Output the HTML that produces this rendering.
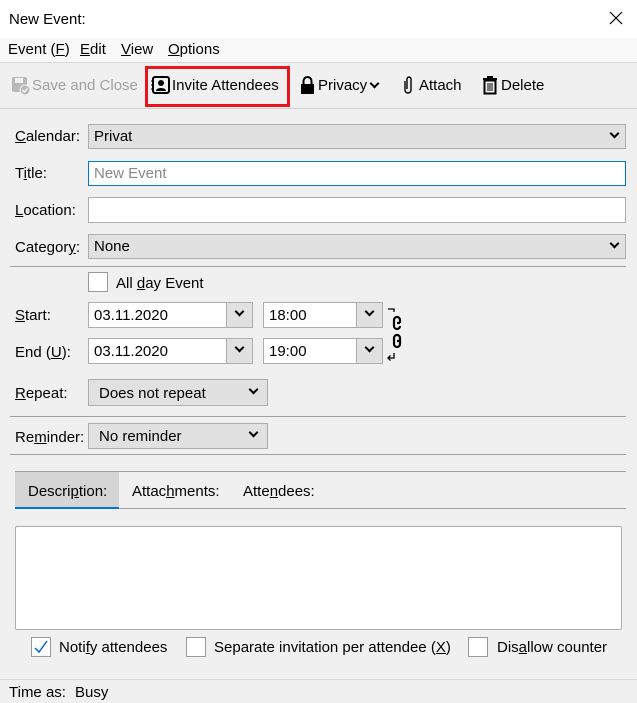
<!DOCTYPE html>
<html><head><meta charset="utf-8"><style>
*{box-sizing:border-box;margin:0;padding:0}
body{width:637px;height:703px;background:#f0f0f0;font-family:"Liberation Sans",sans-serif;font-size:15px;color:#000;position:relative;overflow:hidden}
.a{position:absolute;white-space:nowrap}
.lbl{line-height:20px}
.sel{position:absolute;background:#e1e1e1;border:1px solid #adadad;padding-left:5px;line-height:24px}
.inp{position:absolute;background:#fff;border:1px solid #adadad;padding-left:5px;line-height:25px}
.btn{position:absolute;background:#e1e1e1;border:1px solid #adadad}
.chev{position:absolute;width:7px;height:7px;border-right:2px solid #000;border-bottom:2px solid #000;transform:rotate(45deg)}
.cb{position:absolute;width:20px;height:20px;background:#fff;border:1px solid #999}
.hr{position:absolute;height:1px;background:#a0a0a0}
u{text-decoration:underline}
</style></head><body>
<div class="a" style="left:0;top:0;width:637px;height:38px;background:#fff"></div>
<div class="a lbl" style="left:9px;top:10px">New Event:</div>
<svg class="a" style="left:609px;top:11px" width="14" height="14"><path d="M1 1L13 13M13 1L1 13" stroke="#000" stroke-width="1.2"/></svg>
<div class="a" style="left:0;top:38px;width:637px;height:24px;background:#f9f9f9"></div>
<div class="a lbl" style="left:8px;top:40px">Event (<u>F</u>)</div>
<div class="a lbl" style="left:80px;top:40px"><u>E</u>dit</div>
<div class="a lbl" style="left:121px;top:40px"><u>V</u>iew</div>
<div class="a lbl" style="left:168px;top:40px"><u>O</u>ptions</div>
<div class="hr" style="left:0;top:62px;width:637px;background:#d8d8d8"></div>
<svg class="a" style="left:11px;top:76px" width="20" height="19"><rect x="1" y="1" width="15" height="15" rx="2" fill="#b8b8b8"/><rect x="4" y="2" width="8" height="5" fill="#f0f0f0"/><circle cx="14" cy="14" r="5" fill="#b8b8b8" stroke="#f0f0f0"/><path d="M11.5 14l2 2 3-3.5" stroke="#fff" fill="none" stroke-width="1.3"/></svg>
<div class="a lbl" style="left:32px;top:76px;color:#a0a0a0">Save and Close</div>
<div class="a" style="left:145px;top:66px;width:145px;height:41px;border:3px solid #e8141e"></div>
<svg class="a" style="left:151px;top:76px" width="20" height="18"><rect x="2" y="1" width="16" height="16" rx="2" fill="none" stroke="#000" stroke-width="2"/><circle cx="10" cy="7" r="3" fill="#000"/><path d="M5 15c0-4 10-4 10 0z" fill="#000"/><path d="M0 5h3M0 9h3M0 13h3" stroke="#000"/></svg>
<div class="a lbl" style="left:172px;top:76px">Invite Attendees</div>
<svg class="a" style="left:300px;top:75px" width="15" height="19"><path d="M3.5 9V6a4 4 0 0 1 8 0v3" stroke="#000" stroke-width="2" fill="none"/><rect x="1" y="9" width="13" height="10" fill="#000"/></svg>
<div class="a lbl" style="left:318px;top:76px">Privacy</div>
<div class="chev" style="left:371px;top:80px"></div>
<svg class="a" style="left:402px;top:75px" width="12" height="20"><path d="M3 6v9a3 3 0 0 0 6 0V4a2 2 0 0 0-4 0v10" stroke="#000" stroke-width="1.4" fill="none"/></svg>
<div class="a lbl" style="left:419px;top:76px">Attach</div>
<svg class="a" style="left:482px;top:75px" width="16" height="20"><path d="M1 4h14M6 4V2h4v2" stroke="#000" stroke-width="2" fill="none"/><rect x="2.5" y="5.5" width="11" height="13" fill="none" stroke="#000" stroke-width="2"/><path d="M6 8v8M8 8v8M10 8v8" stroke="#000"/></svg>
<div class="a lbl" style="left:501px;top:76px">Delete</div>
<div class="hr" style="left:0;top:108px;width:637px;background:#d0d0d0"></div>
<div class="a lbl" style="left:15px;top:127px"><u>C</u>alendar:</div>
<div class="sel" style="left:88px;top:124px;width:538px;height:25px">Privat</div><div class="chev" style="left:611px;top:130px"></div>
<div class="a lbl" style="left:15px;top:164px">T<u>i</u>tle:</div>
<div class="inp" style="left:88px;top:161px;width:538px;height:25px;border-color:#0078d7;color:#888;line-height:24px">New Event</div>
<div class="a lbl" style="left:15px;top:201px"><u>L</u>ocation:</div>
<div class="inp" style="left:88px;top:197px;width:538px;height:26px"></div>
<div class="a lbl" style="left:15px;top:238px">Categor<u>y</u>:</div>
<div class="sel" style="left:88px;top:234px;width:538px;height:25px">None</div><div class="chev" style="left:611px;top:240px"></div>
<div class="hr" style="left:10px;top:266px;width:616px"></div>
<div class="cb" style="left:88px;top:272px"></div>
<div class="a lbl" style="left:116px;top:274px">All <u>d</u>ay Event</div>
<div class="a lbl" style="left:15px;top:306px"><u>S</u>tart:</div>
<div class="inp" style="left:88px;top:302px;width:139px;height:26px">03.11.2020</div>
<div class="btn" style="left:226px;top:302px;width:27px;height:26px"></div><div class="chev" style="left:236px;top:308px"></div>
<div class="inp" style="left:263px;top:302px;width:94px;height:26px">18:00</div>
<div class="btn" style="left:356px;top:302px;width:27px;height:26px"></div><div class="chev" style="left:366px;top:308px"></div>
<div class="a lbl" style="left:15px;top:343px">End (<u>U</u>):</div>
<div class="inp" style="left:88px;top:338px;width:139px;height:26px">03.11.2020</div>
<div class="btn" style="left:226px;top:338px;width:27px;height:26px"></div><div class="chev" style="left:236px;top:344px"></div>
<div class="inp" style="left:263px;top:338px;width:94px;height:26px">19:00</div>
<div class="btn" style="left:356px;top:338px;width:27px;height:26px"></div><div class="chev" style="left:366px;top:344px"></div>
<svg class="a" style="left:386px;top:306px" width="18" height="56"><path d="M2 3h6v3" stroke="#000" stroke-width="1.3" fill="none"/><path d="M8 47v5H2M4.5 49.5L2 52l2.5 2.5" stroke="#000" stroke-width="1.3" fill="none"/><path d="M14 17v-3a3 3 0 0 0-6 0v6a3 3 0 0 0 6 0M11 17h3" stroke="#000" stroke-width="2.2" fill="none"/><path d="M14 35v-3a3 3 0 0 0-6 0v6a3 3 0 0 0 6 0v-3M11 35h3" stroke="#000" stroke-width="2.2" fill="none"/></svg>
<div class="a lbl" style="left:15px;top:384px"><u>R</u>epeat:</div>
<div class="sel" style="left:88px;top:379px;width:180px;height:27px;padding-left:10px;line-height:27px">Does not repeat</div><div class="chev" style="left:250px;top:386px"></div>
<div class="hr" style="left:10px;top:416px;width:616px"></div>
<div class="a lbl" style="left:15px;top:428px">Re<u>m</u>inder:</div>
<div class="sel" style="left:88px;top:423px;width:180px;height:26px;padding-left:10px;line-height:26px">No reminder</div><div class="chev" style="left:250px;top:429px"></div>
<div class="hr" style="left:10px;top:454px;width:616px"></div>
<div class="hr" style="left:15px;top:471px;width:611px"></div>
<div class="a" style="left:15px;top:472px;width:104px;height:37px;background:#d5d5d5;border-bottom:2px solid #0078d7"></div>
<div class="a lbl" style="left:28px;top:482px">Descri<u>p</u>tion:</div>
<div class="a lbl" style="left:132px;top:482px">Attac<u>h</u>ments:</div>
<div class="a lbl" style="left:243px;top:482px">Atte<u>n</u>dees:</div>
<div class="hr" style="left:119px;top:508px;width:507px"></div>
<div class="a" style="left:15px;top:526px;width:607px;height:104px;background:#fff;border:1px solid #adadad;border-radius:2px"></div>
<div class="cb" style="left:31px;top:637px"></div>
<svg class="a" style="left:34px;top:640px" width="14" height="14"><path d="M1 8l4 4L13 1" stroke="#0060c0" stroke-width="1.4" fill="none"/></svg>
<div class="a lbl" style="left:59px;top:638px">Noti<u>f</u>y attendees</div>
<div class="cb" style="left:186px;top:637px"></div>
<div class="a lbl" style="left:214px;top:638px">Separate invitation per attendee (<u>X</u>)</div>
<div class="cb" style="left:468px;top:637px"></div>
<div class="a lbl" style="left:497px;top:638px">Dis<u>a</u>llow counter</div>
<div class="hr" style="left:0;top:679px;width:637px;background:#d8d8d8"></div>
<div class="a lbl" style="left:9px;top:683px">Time as:</div>
<div class="a lbl" style="left:75px;top:683px">Busy</div>
</body></html>
